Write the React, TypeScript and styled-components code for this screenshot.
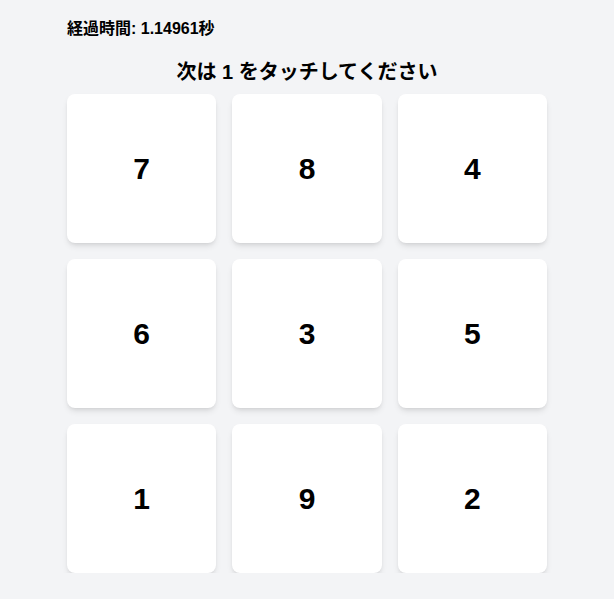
import styled, { createGlobalStyle } from "styled-components";

const GlobalStyle = createGlobalStyle`
    html, body {
        margin: 0;
        padding: 0;
        background-color: #f3f4f6;
        font-family: "Liberation Sans", Arial, "Noto Sans CJK JP", sans-serif;
        color: #000;
    }
`;

const Container = styled.div`
    max-width: 480px;
    margin: 0 auto;
    padding-top: 17px;
`;

const Timer = styled.div`
    font-size: 16px;
    line-height: 24px;
    font-weight: bold;
`;

const Title = styled.h2`
    margin: 17px 0 8px;
    font-size: 20px;
    line-height: 28px;
    font-weight: bold;
    text-align: center;
`;

const Grid = styled.div`
    display: grid;
    grid-template-columns: repeat(3, 1fr);
    gap: 16px;
`;

const Cell = styled.button`
    height: 149px;
    border: none;
    border-radius: 8px;
    background-color: #fff;
    box-shadow: 0 4px 6px -1px rgba(0, 0, 0, 0.1), 0 2px 4px -2px rgba(0, 0, 0, 0.1);
    font-family: inherit;
    font-size: 30px;
    font-weight: bold;
    color: #000;
    cursor: pointer;
    display: flex;
    align-items: center;
    justify-content: center;
`;

const numbers = [7, 8, 4, 6, 3, 5, 1, 9, 2];

function App() {
    return (
        <Container>
            <GlobalStyle />
            <Timer>経過時間: 1.14961秒</Timer>
            <Title>次は 1 をタッチしてください</Title>
            <Grid>
                {numbers.map((n) => (
                    <Cell key={n}>{n}</Cell>
                ))}
            </Grid>
        </Container>
    );
}

export default App;
